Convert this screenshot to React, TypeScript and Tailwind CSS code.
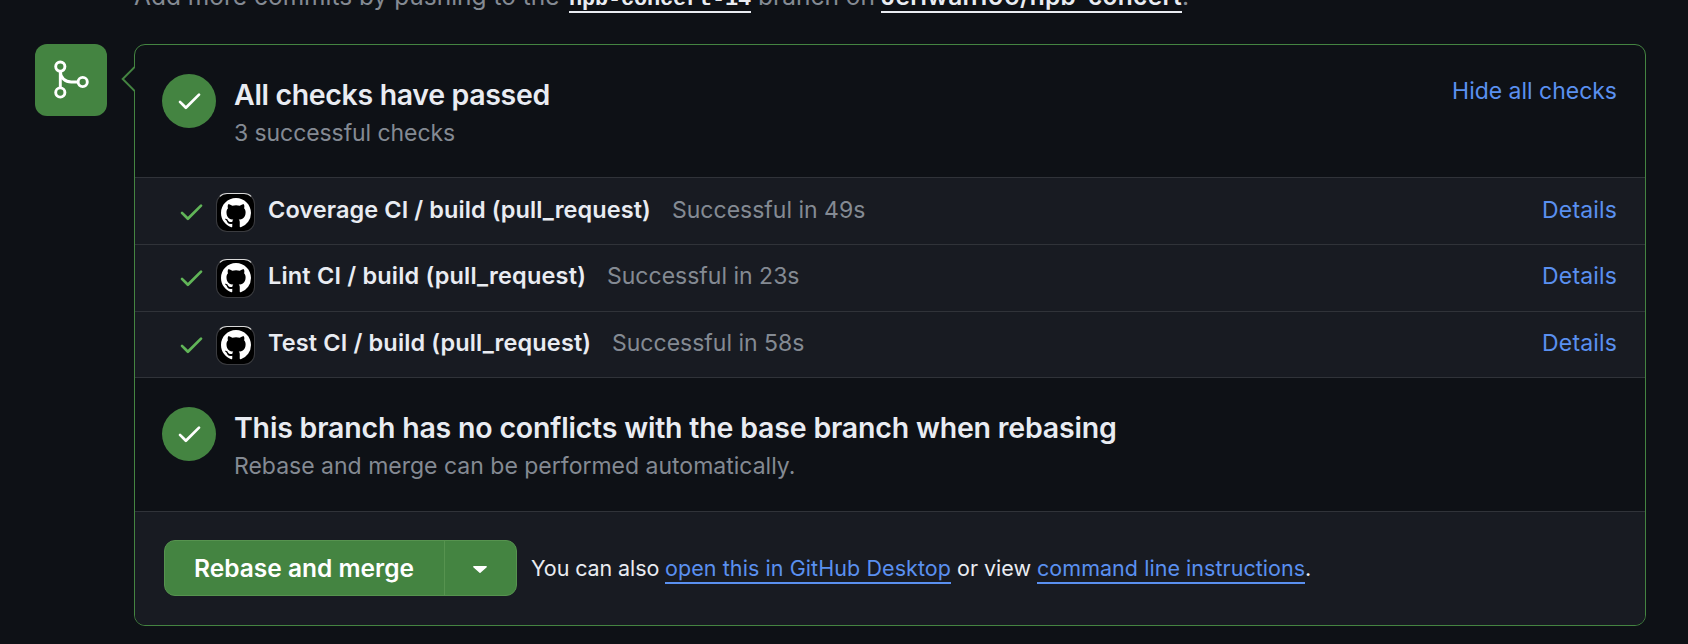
import type { ReactNode } from "react";

const CHECK_PATH =
  "M13.78 4.22a.75.75 0 0 1 0 1.06l-7.25 7.25a.75.75 0 0 1-1.06 0L2.22 9.28a.751.751 0 0 1 .018-1.042.751.751 0 0 1 1.042-.018L6 10.94l6.72-6.72a.75.75 0 0 1 1.06 0Z";

const MARK_PATH =
  "M8 0C3.58 0 0 3.58 0 8c0 3.54 2.29 6.53 5.47 7.59.4.07.55-.17.55-.38 0-.19-.01-.82-.01-1.49-2.01.37-2.53-.49-2.69-.94-.09-.23-.48-.94-.82-1.13-.28-.15-.68-.52-.01-.53.63-.01 1.08.58 1.23.82.72 1.21 1.87.87 2.33.66.07-.52.28-.87.51-1.07-1.78-.2-3.64-.89-3.64-3.95 0-.87.31-1.59.82-2.15-.08-.2-.36-1.02.08-2.12 0 0 .67-.21 2.2.82.64-.18 1.32-.27 2-.27.68 0 1.36.09 2 .27 1.53-1.04 2.2-.82 2.2-.82.44 1.1.16 1.92.08 2.12.51.56.82 1.27.82 2.15 0 3.07-1.87 3.75-3.65 3.95.29.25.54.73.54 1.48 0 1.07-.01 1.93-.01 2.2 0 .21.15.46.55.38A8.013 8.013 0 0 0 16 8c0-4.42-3.58-8-8-8z";

function Check({ className }: { className: string }) {
  return (
    <svg viewBox="0 0 16 16" fill="currentColor" className={`size-[29px] shrink-0 ${className}`}>
      <path d={CHECK_PATH} />
    </svg>
  );
}

function MergeBadge() {
  return (
    <div className="size-[72px] shrink-0 rounded-xl bg-[#448441]">
      <svg viewBox="0 0 72 72" fill="none" stroke="#fff" strokeWidth="2.9" className="size-full">
        <circle cx="25.3" cy="22.6" r="4.6" />
        <circle cx="25.3" cy="48.5" r="4.6" />
        <circle cx="47.7" cy="38" r="4.6" />
        <path d="M25.3 27v17M25.3 27c0 7 5 11 11 11h7" />
      </svg>
    </div>
  );
}

function Avatar() {
  return (
    <div className="ml-[10px] flex size-[39px] shrink-0 items-center justify-center rounded-[11px] border border-[#3a3b3f] border-t-[#d8d8d8] bg-black">
      <svg viewBox="0 0 16 16" fill="#fff" className="size-[30px]">
        <path d={MARK_PATH} />
      </svg>
    </div>
  );
}

type StatusProps = { title: string; note: string; titleClass: string; noteClass: string; action?: ReactNode };

function Status({ title, note, titleClass, noteClass, action }: StatusProps) {
  return (
    <div className="flex pt-[29px] pr-7 pl-[27px]">
      <div className="flex size-[54px] shrink-0 items-center justify-center rounded-full bg-[#448441]">
        <Check className="-mt-[1px] text-white" />
      </div>
      <div className="ml-[18px] grow pt-[1.5px] whitespace-nowrap">
        <h3 className={`text-[28.5px] leading-[38px] font-semibold text-[#e9ecf2] ${titleClass}`}>{title}</h3>
        <p className={`mt-[2px] text-[23px] leading-[34px] text-[#848a93] ${noteClass}`}>{note}</p>
      </div>
      {action}
    </div>
  );
}

const checks = [
  { name: "Coverage CI / build (pull_request)", time: "Successful in 49s", nameClass: "w-[383px] tracking-[0.08px]" },
  { name: "Lint CI / build (pull_request)", time: "Successful in 23s", nameClass: "w-[318px] tracking-[0.18px]" },
  { name: "Test CI / build (pull_request)", time: "Successful in 58s", nameClass: "w-[323px] tracking-[0.13px]" },
];

export default function App() {
  return (
    <div className="h-[644px] w-[1688px] overflow-hidden bg-[#0e1116] font-['Inter',sans-serif]">
      <div className="flex h-11 items-start pl-[134px]">
        <div className="-mt-[19px] flex items-baseline text-[24.5px] leading-[30px] whitespace-nowrap text-[#848a93]">
          <span className="w-[435px]">Add more commits by pushing to the</span>
          <a className="w-[182px] border-b-2 border-[#e9ecf2] font-['Liberation_Mono',monospace] text-[22px] leading-[23px] font-bold tracking-[-0.2px] text-[#e9ecf2]">
            npb-concert-14
          </a>
          <span className="ml-[7px] w-[123px]">branch on</span>
          <a className="w-[301px] border-b-2 border-[#e9ecf2] font-semibold tracking-[0.32px] text-[#e9ecf2]">
            Jeriwan106/npb-concert
          </a>
          <span>.</span>
        </div>
      </div>

      <div className="flex pl-[35px]">
        <MergeBadge />
        <section className="relative ml-[27px] h-[582px] w-[1512px] rounded-[11px] border border-[#448441]">
          <svg viewBox="0 0 14 28" className="absolute top-[20px] -left-[14px] h-7 w-[14px]">
            <path d="M14 1.7 1.7 14 14 26.3" fill="#0e1116" stroke="#448441" strokeWidth="2" />
          </svg>

          <div className="h-[132px]">
            <Status
              title="All checks have passed"
              note="3 successful checks"
              titleClass="tracking-[-0.34px]"
              noteClass="tracking-[-0.08px]"
              action={
                <a className="text-[23px] leading-[34px] tracking-[-0.02px] whitespace-nowrap text-[#5a90f0]">
                  Hide all checks
                </a>
              }
            />
          </div>

          <ul>
            {checks.map((c) => (
              <li
                key={c.name}
                className="flex h-[66.8px] items-start border-t border-[#303339] bg-[#181b22] pt-[14px] pr-7 pl-[42px] text-[23px] leading-[34px] whitespace-nowrap first:pt-[15px]"
              >
                <Check className="mt-[4px] text-[#61b558]" />
                <Avatar />
                <span className={`ml-[13px] text-[23.5px] font-semibold text-[#e9ecf2] ${c.nameClass}`}>{c.name}</span>
                <span className="ml-[21px] grow text-[#848a93]">{c.time}</span>
                <a className="tracking-[0.15px] text-[#5a90f0]">Details</a>
              </li>
            ))}
          </ul>

          <div className="h-[133.6px] border-t border-[#303339]">
            <Status
              title="This branch has no conflicts with the base branch when rebasing"
              note="Rebase and merge can be performed automatically."
              titleClass="tracking-[-0.19px]"
              noteClass="tracking-[0px]"
            />
          </div>

          <div className="flex h-[114px] items-start rounded-b-[10px] border-t border-[#303339] bg-[#181b22] pt-7 pl-[29px]">
            <div className="flex h-14 w-[353px] overflow-hidden rounded-[11px] border border-[#56934f] bg-[#448441]">
              <button className="w-[279px] pr-[1px] text-[24.5px] font-semibold whitespace-nowrap text-white">
                Rebase and merge
              </button>
              <button className="flex grow items-center justify-center border-l border-[#56934f] pr-[2px]">
                <svg viewBox="0 0 14 7" fill="#fff" className="mt-1 h-[7px] w-[14px]">
                  <path d="M.8 0h12.4a.7.7 0 0 1 .5 1.2L7.5 6.8a.8.8 0 0 1-1 0L.3 1.2A.7.7 0 0 1 .8 0Z" />
                </svg>
              </button>
            </div>
            <p className="ml-[14px] flex pt-[14px] text-[21.5px] leading-[28px] whitespace-nowrap text-[#e9ecf2]">
              <span className="w-[134px] tracking-[-0.1px]">You can also</span>
              <a className="w-[286px] border-b-2 border-[#5a90f0] tracking-[0.08px] text-[#5a90f0]">
                open this in GitHub Desktop
              </a>
              <span className="ml-[6px] w-[80px]">or view</span>
              <a className="w-[268px] border-b-2 border-[#5a90f0] tracking-[0.04px] text-[#5a90f0]">
                command line instructions
              </a>
              <span>.</span>
            </p>
          </div>
        </section>
      </div>
    </div>
  );
}
